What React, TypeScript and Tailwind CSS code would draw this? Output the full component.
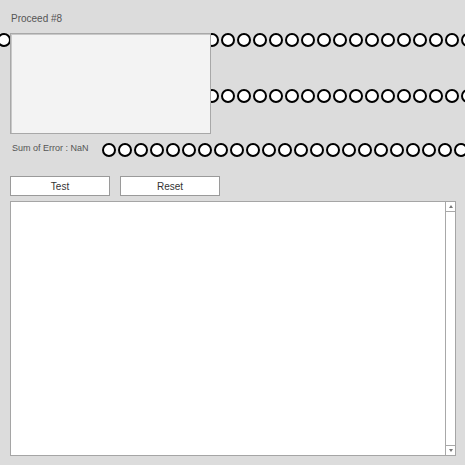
const ring = "inline-block w-[14px] h-[14px] shrink-0 rounded-full border-[2.5px] border-black bg-white";

function Rings({ count }: { count: number }) {
  return (
    <>
      {Array.from({ length: count }).map((_, i) => (
        <span key={i} className={ring} />
      ))}
    </>
  );
}

export default function App() {
  return (
    <div className="w-[465px] h-[465px] overflow-hidden bg-[#dcdcdc] font-['Liberation_Sans',Arial,sans-serif] text-[#555]">
      {/* header label */}
      <div className="pl-[11px] pt-[13px] h-[33px] text-[10px] leading-[12px]">Proceed #8</div>

      {/* rings behind the preview box */}
      <div className="relative h-[100px]">
        <div className="flex gap-[2px] ml-[-3px]">
          <Rings count={30} />
        </div>
        <div className="flex gap-[2px] ml-[13px] mt-[42px]">
          <Rings count={29} />
        </div>
        <div className="absolute left-[10px] top-0 w-[201px] h-[101px] border border-[#a8a8a8] bg-[#f3f3f3] shadow-[inset_1px_1px_0_#c8c8c8]" />
      </div>

      {/* error row */}
      <div className="flex items-end mt-[10px] h-[14px]">
        <span className="shrink-0 pl-[12px] w-[102px] text-[9px] leading-[11px] mb-[3px] whitespace-nowrap">Sum of Error : NaN</span>
        <div className="flex gap-[2px]">
          <Rings count={24} />
        </div>
      </div>

      {/* buttons */}
      <div className="flex gap-[10px] pl-[10px] mt-[19px]">
        <button className="w-[100px] h-[20px] border border-[#9a9a9a] bg-white text-[10px] text-[#333]">Test</button>
        <button className="w-[100px] h-[20px] border border-[#9a9a9a] bg-white text-[10px] text-[#333]">Reset</button>
      </div>

      {/* output area */}
      <div className="ml-[10px] mt-[5px] w-[446px] h-[255px] border border-[#a5a5a5] bg-white flex justify-end">
        <div className="w-[10px] h-full border-l border-[#a8a8a8] flex flex-col justify-between">
          <div className="h-[10px] border-b border-[#a8a8a8] flex items-center justify-center">
            <span className="w-0 h-0 border-l-[2px] border-r-[2px] border-b-[3px] border-l-transparent border-r-transparent border-b-[#777]" />
          </div>
          <div className="h-[10px] border-t border-[#a8a8a8] flex items-center justify-center">
            <span className="w-0 h-0 border-l-[2px] border-r-[2px] border-t-[3px] border-l-transparent border-r-transparent border-t-[#777]" />
          </div>
        </div>
      </div>
    </div>
  );
}
